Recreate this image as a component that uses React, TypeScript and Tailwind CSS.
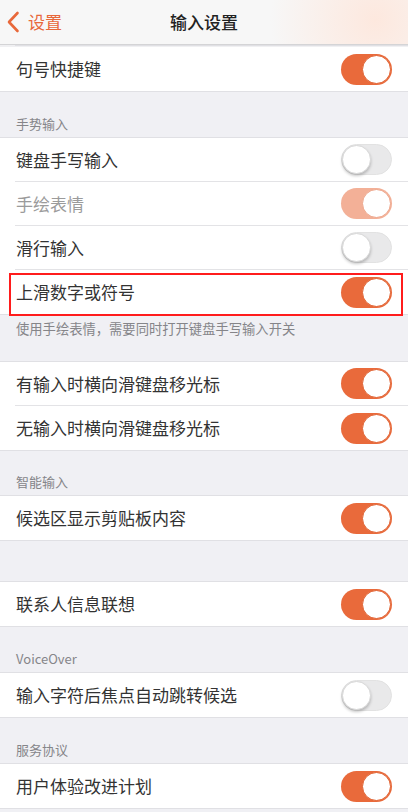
import React from 'react'

const font = { fontFamily: '"Noto Sans CJK SC", "Noto Sans", sans-serif' }

interface ToggleProps {
  on: boolean
  faded?: boolean
}

const Toggle = ({ on, faded }: ToggleProps) => {
  if (!on) {
    return (
      <div className="relative h-[31px] w-[51px] shrink-0 rounded-full border border-[#e2e2e2] bg-[#e9e9ea]">
        <div className="absolute left-[0px] top-[0px] h-[29px] w-[29px] rounded-full bg-white shadow-[0_2px_3px_rgba(0,0,0,0.22)] border border-[#d8d8d8]" />
      </div>
    )
  }
  return (
    <div
      className={`relative h-[31px] w-[51px] shrink-0 rounded-full ${
        faded ? 'bg-[#f3b097]' : 'bg-[#e96a3b]'
      }`}
    >
      <div
        className={`absolute right-[1px] top-[1px] h-[29px] w-[29px] rounded-full bg-white border-[1.5px] ${
          faded ? 'border-[#eea58a]' : 'border-[#e0602f]'
        }`}
      />
    </div>
  )
}

interface RowProps {
  label: string
  on: boolean
  faded?: boolean
  last?: boolean
}

const Row = ({ label, on, faded, last }: RowProps) => (
  <div className="bg-white pl-[15px]">
    <div
      className={`flex h-[44px] items-center justify-between pr-4 pl-[1px] ${
        last ? '' : 'border-b border-[#e3e3e6]'
      }`}
    >
      <span className={`text-[17px] ${faded ? 'text-[#9b9b9b]' : 'text-[#333333]'}`}>{label}</span>
      <Toggle on={on} faded={faded} />
    </div>
  </div>
)

const Header = ({ title, h }: { title?: string; h: string }) => (
  <div className={`flex items-end px-4 pb-[4px] text-[13px] text-[#858589] ${h}`}>{title}</div>
)

const Group = ({ children }: { children: React.ReactNode }) => (
  <div className="border-y border-[#e0e0e4] bg-white">{children}</div>
)

export default function App() {
  return (
    <div className="min-h-[812px] w-[408px] overflow-hidden bg-[#f0f0f4]" style={font}>
      {/* nav bar */}
      <div className="relative flex h-[45px] items-center justify-center border-b border-[#d4d4d6] bg-[#f7f7f7]">
        <div className="absolute inset-0 bg-[radial-gradient(circle_at_92%_45%,#fde8de_0%,rgba(253,232,222,0)_28%)]" />
        <div className="absolute left-[6px] top-0 flex h-full items-center gap-[8px]">
          <svg width="14" height="22" viewBox="0 0 14 22" fill="none">
            <path d="M11.5 2 L3 11 L11.5 20" stroke="#e8683a" strokeWidth="2.6" strokeLinecap="round" strokeLinejoin="round" />
          </svg>
          <span className="text-[17px] text-[#e8683a]">设置</span>
        </div>
        <span className="relative text-[17px] font-medium text-[#222222]">输入设置</span>
      </div>

      {/* first row (scrolled) */}
      <div className="bg-white">
        <div className="h-[2px] bg-[#f0f0f2]">
          <div className="ml-[15px] h-[1px] bg-[#e0e0e4]" />
        </div>
        <div className="border-b border-[#e0e0e4]">
          <div className="flex h-[44px] items-center justify-between pr-4 pl-4">
            <span className="text-[17px] text-[#333333]">句号快捷键</span>
            <Toggle on />
          </div>
        </div>
      </div>

      <Header title="手势输入" h="h-[45px]" />
      <Group>
        <Row label="键盘手写输入" on={false} />
        <Row label="手绘表情" on faded />
        <Row label="滑行输入" on={false} />
        <div className="relative">
          <Row label="上滑数字或符号" on last />
          <div className="absolute left-[9px] right-[5px] top-[3px] bottom-[-2px] border-2 border-[#ff1c1c]" />
        </div>
      </Group>
      <div className="h-[46px] px-4 pt-[4px] text-[13.3px] text-[#858589]">
        使用手绘表情，需要同时打开键盘手写输入开关
      </div>

      <Group>
        <Row label="有输入时横向滑键盘移光标" on />
        <Row label="无输入时横向滑键盘移光标" on last />
      </Group>

      <Header title="智能输入" h="h-[44px]" />
      <Group>
        <Row label="候选区显示剪贴板内容" on last />
      </Group>

      <div className="h-[40px]" />
      <Group>
        <Row label="联系人信息联想" on last />
      </Group>

      <Header title="VoiceOver" h="h-[45px]" />
      <Group>
        <Row label="输入字符后焦点自动跳转候选" on={false} last />
      </Group>

      <Header title="服务协议" h="h-[45px]" />
      <Group>
        <Row label="用户体验改进计划" on last />
      </Group>
    </div>
  )
}
